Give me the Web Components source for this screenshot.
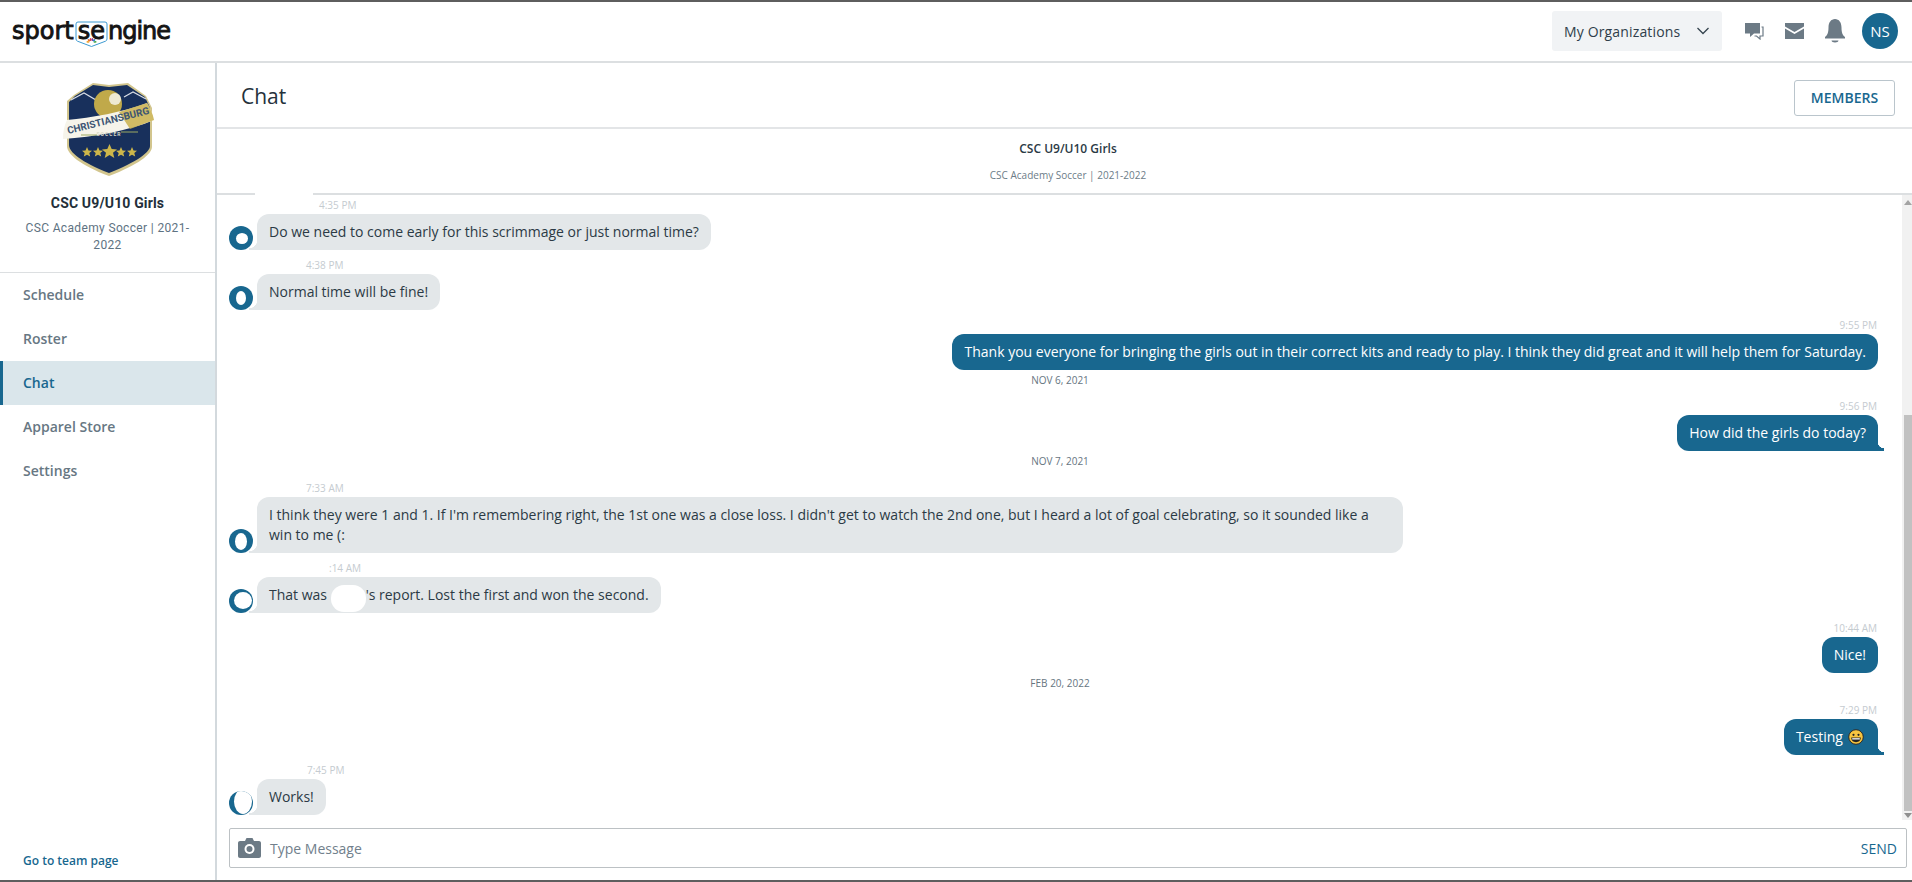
<!DOCTYPE html>
<html>
<head>
<meta charset="utf-8">
<style>
  html, body { margin: 0; height: 100%; overflow: hidden; background: #fff; }
  body { font-family: "Open Sans", sans-serif; font-size: 14px; color: #2b3a45; }
</style>
</head>
<body>
<template id="top-bar-tpl">
  <style>
    :host { display: flex; align-items: center; height: 58px; padding: 0 14px 1px 12px; border-top: 2px solid #5e5e5e; border-bottom: 2px solid #dcdfe1; background: #fff; }
    .logo { display: flex; align-items: center; font-family: "DejaVu Sans", sans-serif; font-size: 24px; color: #141414; -webkit-text-stroke: .9px #141414; line-height: 24px; }
    .se { position: relative; display: inline-block; padding: 0 3px 0 4px; }
    .ng { letter-spacing: -1px; }
    .se svg { position: absolute; left: 1px; top: 2px; -webkit-text-stroke: 0; }
    .spacer { flex: 1; }
    .org { display: flex; align-items: center; width: 170px; height: 40px; box-sizing: border-box; padding: 0 12px; border-radius: 3px; background: #f1f3f5; font-size: 14px; letter-spacing: .15px; color: #2f3e4a; justify-content: space-between; margin-right: 23px; }
    .icons { display: flex; align-items: center; gap: 21px; margin-right: 17px; }
    .avatar { width: 36px; height: 36px; border-radius: 50%; background: #18678f; color: #fff; display: flex; align-items: center; justify-content: center; font-size: 15px; }
    svg { display: block; }
  </style>
  <div class="logo">sport<span class="se">se<svg width="33" height="27" viewBox="0 0 33 27"><path d="M3 1h27q2 0 2 2v15q0 1.500-1.500 2.200L16.500 25.500 2.500 20.200Q1 19.500 1 18V3q0-2 2-2z" fill="none" stroke="#3d9ad1" stroke-width="1"/><g transform="translate(16.500 21.500)"><ellipse cx="-3.600" cy="-.6" rx="1.500" ry=".9" transform="rotate(10 -3.600 -.6)" fill="#f0a72e"/><ellipse cx="-2.600" cy="-2.200" rx="1.500" ry=".9" transform="rotate(40 -2.600 -2.200)" fill="#e8792f"/><ellipse cx="-.9" cy="-3" rx=".9" ry="1.500" fill="#d8344a"/><ellipse cx=".9" cy="-3" rx=".9" ry="1.500" fill="#7d3f98"/><ellipse cx="2.600" cy="-2.200" rx="1.500" ry=".9" transform="rotate(-40 2.600 -2.200)" fill="#2f7fc9"/><ellipse cx="3.600" cy="-.6" rx="1.500" ry=".9" transform="rotate(-10 3.600 -.6)" fill="#4aa84a"/></g></svg></span><span class="ng">ngine</span></div>
  <div class="spacer"></div>
  <div class="org">My Organizations
    <svg width="14" height="8" viewBox="0 0 14 8"><path d="M1.500 1l5.500 5.500L12.500 1" fill="none" stroke="#36444f" stroke-width="1.300"/></svg>
  </div>
  <div class="icons">
    <svg width="19" height="18" viewBox="0 0 19 18"><path d="M0 1h15v10.500H9L5 15v-3.500H0z" fill="#6c7a85"/><path d="M16.500 5H18v9h-3v3l-3.500-3H9.500" fill="none" stroke="#6c7a85" stroke-width="1.200"/></svg>
    <svg width="19" height="16" viewBox="0 0 19 16"><path d="M0 0h19v3.500L9.500 9 0 3.500z" fill="#6c7a85"/><path d="M0 5.500L9.500 11 19 5.500V16H0z" fill="#6c7a85"/></svg>
    <svg width="20" height="24" viewBox="0 0 20 24"><path d="M10 0c4 0 6.500 3.500 6.500 8.500 0 5 1 7.500 3.500 9.500v1.500H0V18c2.500-2 3.500-4.500 3.500-9.500C3.500 3.500 6 0 10 0z" fill="#6c7a85"/><path d="M6.500 21.500h7c0 1.200-1.500 2-3.500 2s-3.500-.8-3.500-2z" fill="#6c7a85"/></svg>
  </div>
  <div class="avatar">NS</div>
</template>

<template id="side-bar-tpl">
  <style>
    :host { display: flex; flex-direction: column; width: 215px; flex: none; border-right: 2px solid #d3d9dd; background: #fff; }
    .team { height: 210px; box-sizing: border-box; border-bottom: 1px solid #dcdfe1; display: flex; flex-direction: column; align-items: center; padding-top: 19px; }
    .name { margin-top: 17px; font-family: Roboto, sans-serif; font-weight: 700; font-size: 14px; color: #232f3a; line-height: 20px; letter-spacing: .15px; }
    .org { margin-top: 7px; width: 180px; text-align: center; font-family: Roboto, sans-serif; font-size: 12px; line-height: 17px; color: #5e7282; letter-spacing: .35px; }
    nav { display: flex; flex-direction: column; flex: 1; }
    .foot { padding: 0 0 11px 23px; font-size: 12px; font-weight: 600; color: #18678f; }
    svg { display: block; }
  </style>
  <div class="team">
    <svg width="94" height="94" viewBox="0 0 94 94">
      <path d="M32 1l16 2 19-2 18 13 6 12v39c0 7-14 18-43 29C19 83 6 72 6 64V19l7-6z" fill="#d2c58d"/>
      <path d="M32 3l16 2 18-2 18 12 5 11v38c0 6-13 16-41 27C20 80 8 70 8 63V20l6-6z" fill="#18305c"/>
      <path d="M10 18l13-7 12 7 11-5M63 15l9-5 13 7" fill="none" stroke="#d6dbe4" stroke-width="1.200"/>
      <circle cx="47" cy="22" r="14" fill="#c0a94a"/>
      <circle cx="54" cy="17" r="6" fill="#eee9d2"/>
      <path d="M2 57c0-7 1-13 4-19 24-2 56-8 80-17 3 5 6 11 7 17-26 11-60 17-91 19z" fill="#f6f4ea"/>
      <path d="M58 30l28-9c3 5 6 11 7 17l-24 9z" fill="#c9b04e" opacity=".85"/>
      <text x="47" y="42" text-anchor="middle" transform="rotate(-14 47 38)" font-family="Roboto, sans-serif" font-weight="700" font-size="10" textLength="84" lengthAdjust="spacingAndGlyphs" fill="#3c5473">CHRISTIANSBURG</text>
      <path d="M20 53H36M60 50H77" stroke="#9da962" stroke-width="1"/>
      <text x="48" y="54" text-anchor="middle" font-family="Roboto, sans-serif" font-weight="700" font-size="5" letter-spacing="1" fill="#d9d9c7">SOCCER</text>
      <g fill="#cdb64a"><path d="M26 65l1.500 3.500 3.500.3-2.700 2.300.9 3.500-3.200-1.900-3.200 1.900.9-3.500-2.700-2.300 3.500-.3zM37 65l1.500 3.500 3.500.3-2.700 2.300.9 3.500-3.200-1.900-3.200 1.900.9-3.500-2.700-2.300 3.500-.3zM60 65l1.500 3.500 3.500.3-2.700 2.300.9 3.500-3.200-1.900-3.200 1.900.9-3.500-2.700-2.300 3.500-.3zM71 65l1.500 3.500 3.500.3-2.700 2.300.9 3.500-3.200-1.900-3.200 1.900.9-3.500-2.700-2.300 3.500-.3z"/><path d="M48.500 62l2.200 5 5.300.4-4 3.400 1.300 5.200-4.800-2.900-4.800 2.900 1.300-5.200-4-3.400 5.300-.4z"/></g>
    </svg>
    <div class="name">CSC U9/U10 Girls</div>
    <div class="org">CSC Academy Soccer | 2021-2022</div>
  </div>
  <nav><slot></slot></nav>
  <div class="foot">Go to team page</div>
</template>

<template id="side-link-tpl">
  <style>
    :host { display: flex; align-items: center; height: 44px; box-sizing: border-box; padding: 0 0 2px 23px; font-size: 14px; font-weight: 600; color: #677783; }
    :host([active]) { background: #dae6eb; color: #18678f; border-left: 3px solid #18678f; padding-left: 20px; }
  </style>
  <slot></slot>
</template>

<template id="chat-panel-tpl">
  <style>
    :host { display: flex; flex-direction: column; flex: 1; min-width: 0; }
    .title { height: 66px; box-sizing: border-box; flex: none; display: flex; align-items: center; justify-content: space-between; padding: 5px 17px 0 24px; border-bottom: 2px solid #e3e5e7; font-size: 21px; color: #25313b; }
    .title span { margin-top: -3px; }
    .members { display: flex; align-items: center; justify-content: center; width: 101px; height: 36px; box-sizing: border-box; border: 1px solid #bac5cc; border-radius: 3px; font-size: 14px; font-weight: 600; color: #18678f; }
    .conv { height: 66px; flex: none; box-sizing: border-box; border-bottom: 2px solid #dcdfe1; text-align: center; padding: 11px 0 0 7px; }
    .conv b { display: block; font-size: 12px; font-weight: 600; line-height: 18px; color: #2b3a45; }
    .conv span { display: block; margin-top: 10px; font-size: 10px; line-height: 14px; color: #6c7c88; }
    .body { flex: 1; display: flex; min-height: 0; }
    .msgs { flex: 1; min-width: 0; display: flex; flex-direction: column; padding: 3px 24px 0 12px; box-sizing: border-box; }
    .bar { width: 10px; flex: none; background: #f1f1f1; display: flex; flex-direction: column; align-items: flex-end; margin-bottom: 6px; }
    .arrow { width: 8px; display: flex; align-items: center; justify-content: center; flex: none; }
    .arrow i { border: 4px solid transparent; }
    .up { height: 14px; }
    .down { height: 9px; }
    .up i { border-bottom: 5px solid #a3a3a3; border-top: 0; }
    .down i { border-top: 5px solid #8f8f8f; border-bottom: 0; }
    .gap { height: 206px; flex: none; }
    .thumb { flex: 1; width: 8px; background: #c1c1c1; }
    .input { flex: none; margin: 2px 5px 12px 12px; height: 40px; box-sizing: border-box; border: 1px solid #bcc1c4; border-radius: 2px; display: flex; align-items: center; padding: 0 9px 0 8px; color: #71808c; }
    .input svg { display: block; margin-right: 9px; }
    .input span { flex: 1; font-size: 14px; }
    .input b { font-weight: 400; color: #18678f; font-size: 14px; }
  </style>
  <div class="title"><span>Chat</span><div class="members">MEMBERS</div></div>
  <div class="conv"><b>CSC U9/U10 Girls</b><span>CSC Academy Soccer | 2021-2022</span></div>
  <div class="body">
    <div class="msgs"><slot></slot></div>
    <div class="bar">
      <div class="arrow up"><i></i></div>
      <div class="gap"></div>
      <div class="thumb"></div>
      <div class="arrow down"><i></i></div>
    </div>
  </div>
  <div class="input">
    <svg width="23" height="20" viewBox="0 0 23 20"><path d="M2 3h5l1.500-3h6L16 3h5c1.100 0 2 .9 2 2v13c0 1.100-.9 2-2 2H2c-1.100 0-2-.9-2-2V5c0-1.100.9-2 2-2z" fill="#6c7a85"/><circle cx="11.500" cy="11" r="5" fill="#fff"/><circle cx="11.500" cy="11" r="3" fill="#6c7a85"/></svg>
    <span>Type Message</span><b>SEND</b>
  </div>
</template>

<template id="date-line-tpl">
  <style>
    :host { display: block; height: 10px; margin: 5px 0 0; padding-left: 13px; text-align: center; font-size: 10px; line-height: 10px; color: #66757f; }
  </style>
  <slot></slot>
</template>

<template id="chat-msg-tpl">
  <style>
    :host { display: flex; flex-direction: column; position: relative; margin-top: var(--top, 0px); }
    .time { font-size: 10px; line-height: 14px; height: 14px; color: #c5cbd0; margin-bottom: 2px; }
    .row { display: flex; align-items: flex-end; }
    .av { width: 24px; height: 24px; border-radius: 50%; background: #18678f; flex: none; margin-right: 4px; position: relative; overflow: hidden; }
    .av::after { content: ""; position: absolute; left: var(--hx, 7px); top: var(--hy, 7px); width: var(--hw, 10px); height: var(--hh, 10px); background: #fff; border-radius: 50%; }
    .bub { position: relative; box-sizing: border-box; max-width: 1146px; padding: 8px 12px; line-height: 20px; font-size: 14px; background: #e3e7e9; color: #2b3a45; border-radius: 12px; border-bottom-left-radius: 0; }
    .bub::before { content: ""; position: absolute; left: -8px; bottom: 0; width: 8px; height: 10px; background: radial-gradient(circle at 0 0, transparent 8px, #e3e7e9 8.500px); }
    .smudge { display: none; position: absolute; left: 26px; top: -6px; width: 58px; height: 22px; background: #fff; border-radius: 0 0 10px 12px; }
    :host([smudge]) .smudge { display: block; }
    :host([out]) .row { justify-content: flex-end; }
    :host([out]) .time { text-align: right; padding-right: 1px; }
    :host([out]) .bub { background: #18678f; color: #fff; border-radius: 12px; }
    :host([out]) .bub::before { display: none; }
    :host([tail]) .bub { border-bottom-right-radius: 0; }
    :host([tail]) .bub::after { content: ""; position: absolute; right: -6px; bottom: 0; width: 6px; height: 9px; background: radial-gradient(circle at 100% 0, transparent 6px, #18678f 6.500px); }
    :host([out]) .av { display: none; }
  </style>
  <div class="time"></div>
  <div class="row"><div class="av"></div><div class="bub"><slot></slot></div></div>
  <div class="smudge"></div>
</template>

<template id="app-shell-tpl">
  <style>
    :host { display: flex; flex-direction: column; height: 882px; box-sizing: border-box; }
    .main { flex: 1; display: flex; min-height: 0; border-bottom: 2px solid #5e5e5e; }
  </style>
  <slot name="top"></slot>
  <div class="main"><slot></slot></div>
</template>

<app-shell>
  <top-bar slot="top"></top-bar>
  <side-bar>
    <side-link>Schedule</side-link>
    <side-link>Roster</side-link>
    <side-link active>Chat</side-link>
    <side-link>Apparel Store</side-link>
    <side-link>Settings</side-link>
  </side-bar>
  <chat-panel>
    <chat-msg smudge time="4:35 PM" time-x="90" style="--hx:7px;--hy:7px;--hw:12px;--hh:11px">Do we need to come early for this scrimmage or just normal time?</chat-msg>
    <chat-msg time="4:38 PM" time-x="77" style="--top:8px;--hx:7px;--hy:5px;--hw:10px;--hh:14px">Normal time will be fine!</chat-msg>
    <chat-msg out time="9:55 PM" style="--top:8px">Thank you everyone for bringing the girls out in their correct kits and ready to play. I think they did great and it will help them for Saturday.</chat-msg>
    <date-line>NOV 6, 2021</date-line>
    <chat-msg out tail time="9:56 PM" style="--top:14px">How did the girls do today?</chat-msg>
    <date-line>NOV 7, 2021</date-line>
    <chat-msg time="7:33 AM" time-x="77" style="--top:15px;--hx:6px;--hy:4px;--hw:12px;--hh:17px">I think they were 1 and 1. If I'm remembering right, the 1st one was a close loss. I didn't get to watch the 2nd one, but I heard a lot of goal celebrating, so it sounded like a win to me (:</chat-msg>
    <chat-msg time=":14 AM" time-x="100" style="--top:8px;--hx:5px;--hy:3px;--hw:18px;--hh:17px">That was <span style="display:inline-block;width:35px;height:27px;margin:-8px 0;background:#fff;border-radius:13px;vertical-align:middle;position:relative;top:2px"></span>'s report. Lost the first and won the second.</chat-msg>
    <chat-msg out time="10:44 AM" style="--top:8px">Nice!</chat-msg>
    <date-line>FEB 20, 2022</date-line>
    <chat-msg out tail time="7:29 PM" style="--top:15px">Testing <svg width="16" height="16" viewBox="0 0 16 16" style="vertical-align:-3px;margin:0 2px 0 1.500px"><circle cx="8" cy="8" r="7.300" fill="#f7c53f" stroke="#2a2a2a" stroke-width="1"/><circle cx="5.500" cy="5.800" r="1.100" fill="#222"/><circle cx="10.500" cy="5.800" r="1.100" fill="#222"/><path d="M3.200 8.500h9.600c0 2.800-2.100 4.700-4.800 4.700S3.200 11.300 3.200 8.500z" fill="#222"/><path d="M4.200 9.200h7.600v1.300H4.200z" fill="#fff"/></svg></chat-msg>
    <chat-msg time="7:45 PM" time-x="78" style="--top:8px;--hx:5px;--hy:-2px;--hw:18px;--hh:25px">Works!</chat-msg>
  </chat-panel>
</app-shell>

<script>
  // plain elements: clone the template into an open shadow root
  function simple(tag, tplId) {
    customElements.define(tag, class extends HTMLElement {
      constructor() {
        super();
        this.attachShadow({ mode: 'open' });
        this.shadowRoot.appendChild(document.getElementById(tplId).content.cloneNode(true));
      }
    });
  }
  simple('app-shell', 'app-shell-tpl');
  simple('top-bar', 'top-bar-tpl');
  simple('side-bar', 'side-bar-tpl');
  simple('side-link', 'side-link-tpl');
  simple('chat-panel', 'chat-panel-tpl');
  simple('date-line', 'date-line-tpl');

  class ChatMsg extends HTMLElement {
    constructor() {
      super();
      this.attachShadow({ mode: 'open' });
      this.shadowRoot.appendChild(document.getElementById('chat-msg-tpl').content.cloneNode(true));
    }
    connectedCallback() {
      const time = this.shadowRoot.querySelector('.time');
      time.textContent = this.getAttribute('time');
      // the sender name in front of the time is blanked out in the reference
      if (this.hasAttribute('time-x')) time.style.paddingLeft = this.getAttribute('time-x') + 'px';
    }
  }
  customElements.define('chat-msg', ChatMsg);
</script>
</body>
</html>
